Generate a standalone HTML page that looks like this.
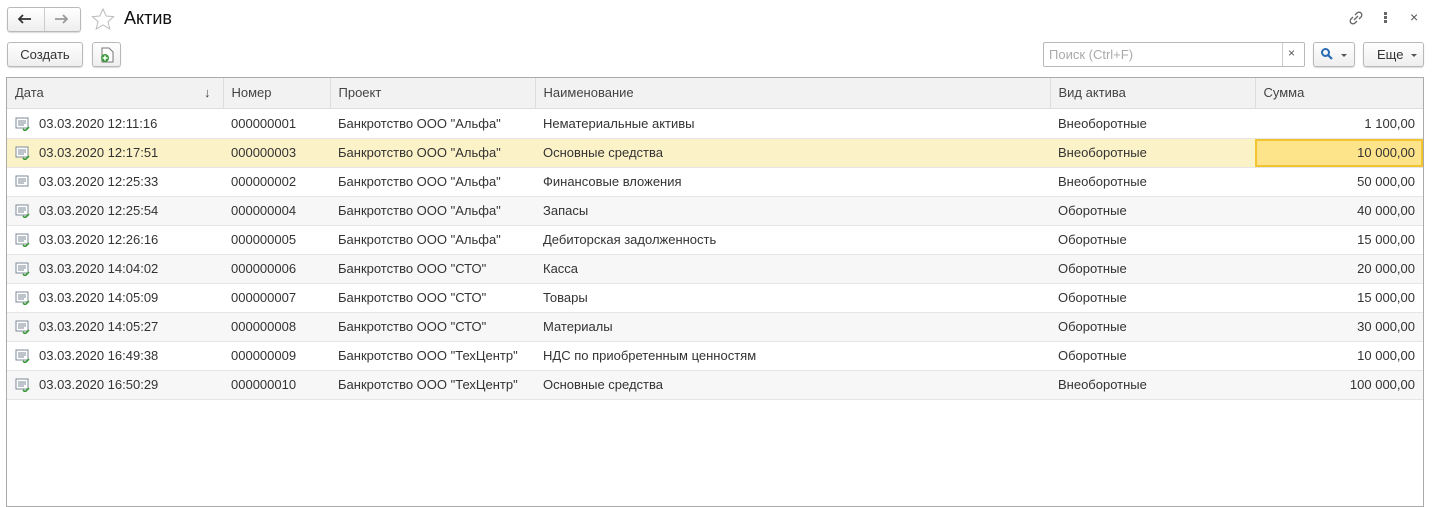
<!DOCTYPE html>
<html><head><meta charset="utf-8"><style>
*{box-sizing:border-box;margin:0;padding:0}
body{width:1434px;height:504px;background:#fff;font-family:"Liberation Sans",Arial,sans-serif;font-size:13px;color:#333;position:relative;overflow:hidden}
.abs{position:absolute}
.btn{position:absolute;border:1px solid #b9b9b9;border-radius:3px;background:linear-gradient(#fff,#eee);box-shadow:0 1px 1px rgba(0,0,0,.15)}
table{position:absolute;left:7px;top:78px;width:1416px;border-collapse:collapse;table-layout:fixed}
th{height:30px;background:#f2f2f2;font-weight:normal;text-align:left;padding-left:8px;color:#444;border-right:1px solid #ddd;border-bottom:1px solid #ddd;font-size:13px}
td{height:29px;padding-left:8px;border-bottom:1px solid #e5e5e5;white-space:nowrap;color:#333}
tr.g td{background:#f7f7f7}
tr.s td{background:#fcf2c8}
td.r{text-align:right;padding-right:8px}
.grid{position:absolute;left:6px;top:77px;width:1418px;height:430px;border:1px solid #aaa}
</style></head><body>
<div class="btn" style="left:7px;top:7px;width:74px;height:25px"></div>
<div class="abs" style="left:44px;top:8px;width:1px;height:23px;background:#ccc"></div>
<svg class="abs" style="left:18px;top:14px" width="14" height="10"><path d="M1 5h12M5 1L1 5l4 4" stroke="#333" stroke-width="1.8" fill="none"/></svg>
<svg class="abs" style="left:54px;top:14px" width="14" height="10"><path d="M1 5h12M9 1l4 4-4 4" stroke="#999" stroke-width="1.8" fill="none"/></svg>
<svg class="abs" style="left:91px;top:8px" width="24" height="23"><path d="M12 1l3.2 7 7.5.6-5.7 5 1.8 7.4L12 17l-6.8 4 1.8-7.4-5.7-5 7.5-.6z" fill="none" stroke="#bbb"/></svg>
<div class="abs" style="left:124px;top:8px;font-size:18px;color:#111">Актив</div>
<svg class="abs" style="left:1348px;top:10px" width="16" height="16"><path d="M6 10l4-4M7 5l2-2a2.5 2.5 0 0 1 4 4l-2 2M9 11l-2 2a2.5 2.5 0 0 1-4-4l2-2" stroke="#666" stroke-width="1.3" fill="none"/></svg>
<div class="abs" style="left:1384px;top:12px;width:3px;height:3px;background:#666;box-shadow:0 4px #666,0 8px #666"></div>
<div class="abs" style="left:1410px;top:9px;font-size:14px;color:#555">×</div>
<div class="btn" style="left:7px;top:42px;width:76px;height:25px;text-align:center;line-height:23px;color:#333">Создать</div>
<div class="btn" style="left:92px;top:42px;width:29px;height:25px"></div>
<svg class="abs" style="left:99px;top:47px" width="16" height="16"><path d="M3 1h7l4 4v10H3z" fill="#fff" stroke="#777"/><circle cx="6" cy="11" r="4" fill="#3a9a3a"/><path d="M6 8.5v5M3.5 11h5" stroke="#fff" stroke-width="1.5"/></svg>
<div class="abs" style="left:1043px;top:42px;width:262px;height:25px;border:1px solid #b9b9b9;border-radius:2px"></div>
<div class="abs" style="left:1282px;top:43px;width:1px;height:23px;background:#ccc"></div>
<div class="abs" style="left:1049px;top:47px;color:#aaa">Поиск (Ctrl+F)</div>
<div class="abs" style="left:1288px;top:46px;color:#555;font-size:12px">×</div>
<div class="btn" style="left:1313px;top:42px;width:42px;height:25px"></div>
<svg class="abs" style="left:1320px;top:47px" width="14" height="14"><circle cx="5.5" cy="5.5" r="3.5" stroke="#2a6bb5" stroke-width="2" fill="none"/><path d="M8 8l4 4" stroke="#2a6bb5" stroke-width="2.2"/></svg>
<div class="abs" style="left:1341px;top:54px;border:3px solid transparent;border-top-color:#555;border-bottom:0"></div>
<div class="btn" style="left:1363px;top:42px;width:61px;height:25px;line-height:23px;padding-left:13px;color:#333">Еще</div>
<div class="abs" style="left:1411px;top:54px;border:3px solid transparent;border-top-color:#555;border-bottom:0"></div>
<div class="grid"></div>
<table>
<colgroup><col style="width:216px"><col style="width:107px"><col style="width:205px"><col style="width:515px"><col style="width:205px"><col style="width:168px"></colgroup>
<tr><th>Дата<span style="float:right;margin-right:12px">↓</span></th><th>Номер</th><th>Проект</th><th>Наименование</th><th>Вид актива</th><th style="border-right:0">Сумма</th></tr>
</table>
<table style="top:109px" id="t">
<colgroup><col style="width:216px"><col style="width:107px"><col style="width:205px"><col style="width:515px"><col style="width:205px"><col style="width:168px"></colgroup>
</table>
<script>
var d=[["12:11:16","01","Альфа","Нематериальные активы","Внеоборотные","1 100,00"],
["12:17:51","03","Альфа","Основные средства","Внеоборотные","10 000,00"],
["12:25:33","02","Альфа","Финансовые вложения","Внеоборотные","50 000,00"],
["12:25:54","04","Альфа","Запасы","Оборотные","40 000,00"],
["12:26:16","05","Альфа","Дебиторская задолженность","Оборотные","15 000,00"],
["14:04:02","06","СТО","Касса","Оборотные","20 000,00"],
["14:05:09","07","СТО","Товары","Оборотные","15 000,00"],
["14:05:27","08","СТО","Материалы","Оборотные","30 000,00"],
["16:49:38","09","ТехЦентр","НДС по приобретенным ценностям","Оборотные","10 000,00"],
["16:50:29","10","ТехЦентр","Основные средства","Внеоборотные","100 000,00"]];
var h="";
d.forEach(function(r,i){
var cls=i==1?"s":(i%2==1?"g":"");
var chk=i==2?"":'<path d="M8 12l2 2 4-4" stroke="#3a9a3a" stroke-width="1.6" fill="none"/>';
var ic='<svg width="16" height="14" style="vertical-align:-3px;margin-right:8px"><rect x="1" y="1" width="12" height="10" fill="#fff" stroke="#7d8a99"/><path d="M3 4h8M3 6h8M3 8h6" stroke="#7d8a99"/>'+chk+'</svg>';
var last=i==1?' style="background:#fde38a;box-shadow:inset 0 0 0 2px #f2c431"':'';
h+='<tr class="'+cls+'"><td>'+ic+'03.03.2020 '+r[0]+'</td><td>0000000'+r[1]+'</td><td>Банкротство ООО "'+r[2]+'"</td><td>'+r[3]+'</td><td>'+r[4]+'</td><td class="r"'+last+'>'+r[5]+'</td></tr>';
});
document.getElementById("t").insertAdjacentHTML("beforeend",h);
</script>
</body></html>
